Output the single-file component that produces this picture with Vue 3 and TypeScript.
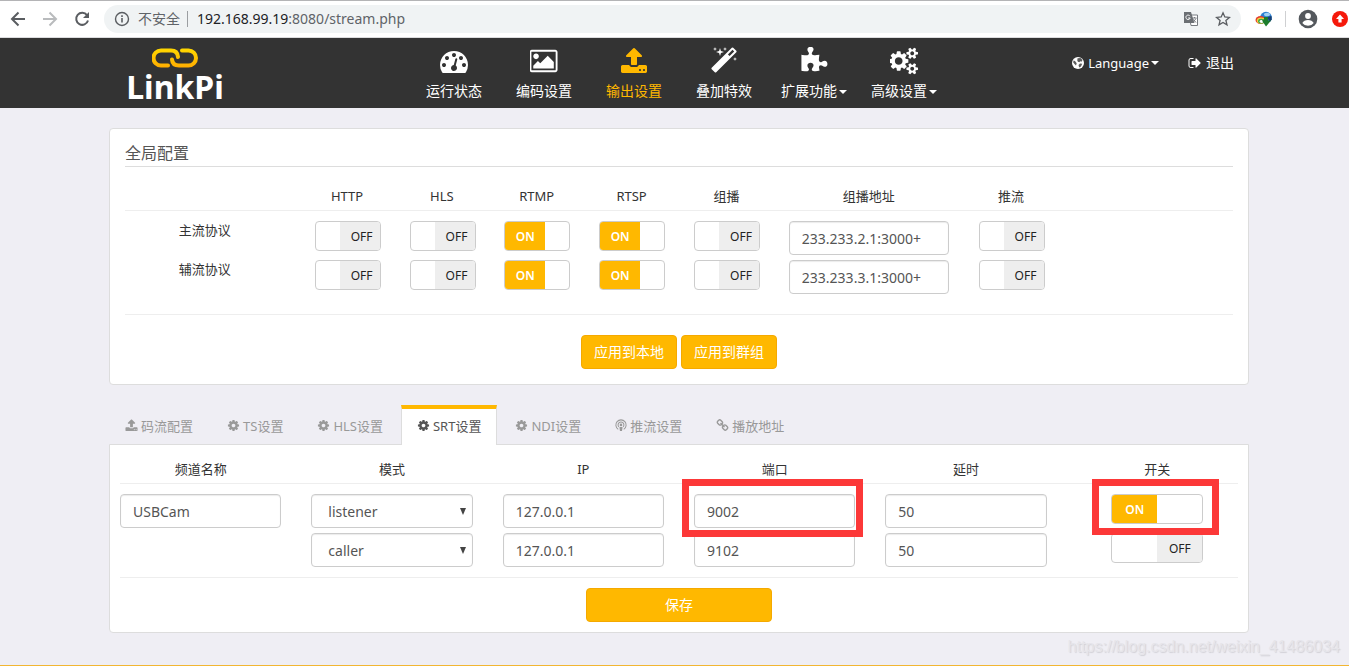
<script setup lang="ts">
import { ref } from 'vue'

interface NavItem { label: string; icon: string; box: string; active?: boolean; caret?: boolean }
interface Tab { label: string; icon: string; active?: boolean }

const cog = 'M1152 896q0-106-75-181t-181-75-181 75-75 181 75 181 181 75 181-75 75-181zm512-109v222q0 12-8 23t-20 13l-185 28q-19 54-39 91 35 50 107 138 10 12 10 25t-9 23q-27 37-99 108t-94 71q-12 0-26-9l-138-108q-44 23-91 38-16 136-29 186-7 28-36 28h-222q-14 0-24.5-8.5t-11.5-21.5l-28-184q-49-16-90-37l-141 107q-10 9-25 9-14 0-25-11-126-114-165-168-7-10-7-23 0-12 8-23 15-21 51-66.5t54-70.5q-27-50-41-99l-183-27q-13-2-21-12.5t-8-23.5v-222q0-12 8-23t19-13l186-28q14-46 39-92-40-57-107-138-10-12-10-24 0-10 9-23 26-36 98.5-107.5t94.5-71.5q13 0 26 10l138 107q44-23 91-38 16-136 29-186 7-28 36-28h222q14 0 24.5 8.5t11.5 21.5l28 184q49 16 90 37l142-107q9-9 24-9 13 0 25 10 129 119 165 170 7 8 7 22 0 12-8 23-15 21-51 66.5t-54 70.5q26 50 41 98l183 28q13 2 21 12.5t8 23.5z'
const upload = 'M1344 1472q0-26-19-45t-45-19-45 19-19 45 19 45 45 19 45-19 19-45zm256 0q0-26-19-45t-45-19-45 19-19 45 19 45 45 19 45-19 19-45zm128-224v320q0 40-28 68t-68 28h-1472q-40 0-68-28t-28-68v-320q0-40 28-68t68-28h427q21 56 70.5 92t110.5 36h256q61 0 110.5-36t70.5-92h427q40 0 68 28t28 68zm-325-648q-17 40-59 40h-256v448q0 26-19 45t-45 19h-256q-26 0-45-19t-19-45v-448h-256q-42 0-59-40-17-39 14-69l448-448q18-19 45-19t45 19l448 448q31 30 14 69z'
const gauge = 'M384 1152q0-53-37.5-90.5t-90.5-37.5-90.5 37.5-37.5 90.5 37.5 90.5 90.5 37.5 90.5-37.5 37.5-90.5zm192-448q0-53-37.5-90.5t-90.5-37.5-90.5 37.5-37.5 90.5 37.5 90.5 90.5 37.5 90.5-37.5 37.5-90.5zm428 481l101-382q6-26-7.5-48.5t-38.5-29.5-48 6.5-30 39.5l-101 382q-60 5-107 43.5t-63 98.5q-20 77 20 146t117 89 146-20 89-117q16-60-6-117t-72-91zm660-33q0-53-37.5-90.5t-90.5-37.5-90.5 37.5-37.5 90.5 37.5 90.5 90.5 37.5 90.5-37.5 37.5-90.5zm-640-640q0-53-37.5-90.5t-90.5-37.5-90.5 37.5-37.5 90.5 37.5 90.5 90.5 37.5 90.5-37.5 37.5-90.5zm448 192q0-53-37.5-90.5t-90.5-37.5-90.5 37.5-37.5 90.5 37.5 90.5 90.5 37.5 90.5-37.5 37.5-90.5zm320 448q0 261-141 483-19 29-54 29h-1402q-35 0-54-29-141-221-141-483 0-182 71-348t191-286 286-191 348-71 348 71 286 191 191 286 71 348z'
const picture = 'M576 576q0 80-56 136t-136 56-136-56-56-136 56-136 136-56 136 56 56 136zm1024 384v448h-1408v-192l320-320 160 160 512-512zm96-704h-1600q-13 0-22.5 9.5t-9.5 22.5v1216q0 13 9.5 22.5t22.5 9.5h1600q13 0 22.5-9.5t9.5-22.5v-1216q0-13-9.5-22.5t-22.5-9.5zm160 32v1216q0 66-47 113t-113 47h-1600q-66 0-113-47t-47-113v-1216q0-66 47-113t113-47h1600q66 0 113 47t47 113z'
const magic = 'M1254 581l293-293-107-107-293 293zm447-293q0 27-18 45l-1286 1286q-18 18-45 18t-45-18l-198-198q-18-18-18-45t18-45l1286-1286q18-18 45-18t45 18l198 198q18 18 18 45zm-1351-190l98 30-98 30-30 98-30-98-98-30 98-30 30-98zm350 162l196 60-196 60-60 196-60-196-196-60 196-60 60-196zm930 478l98 30-98 30-30 98-30-98-98-30 98-30 30-98zm-640-640l98 30-98 30-30 98-30-98-98-30 98-30 30-98z'
const puzzle = 'M1755 1082q0 81-44.5 135t-123.5 54q-41 0-77.5-17.5t-59-38-56.5-38-71-17.5q-110 0-110 124 0 39 16 115t15 115v5q-22 0-33 1-34 3-97.5 11.5t-115.5 13.5-98 5q-61 0-103-26.5t-42-83.5q0-37 17.5-71t38-56.5 38-59 17.5-77.5q0-79-54-123.5t-135-44.5q-84 0-143 45.5t-59 127.5q0 43 15 83t33.5 64.5 33.5 53 15 50.5q0 45-46 89-37 35-117 35-95 0-245-24-9-2-27.5-4t-27.5-4l-13-2q-1 0-3-1-2 0-2-1v-1024q2 1 17.5 3.5t34 5 21.5 3.5q150 24 245 24 80 0 117-35 46-44 46-89 0-22-15-50.5t-33.5-53-33.5-64.5-15-83q0-82 59-127.5t144-45.5q80 0 134 44.5t54 123.5q0 41-17.5 77.5t-38 59-38 56.5-17.5 71q0 57 42 83.5t103 26.5q64 0 180-15t163-17v2q-1 2-3.5 17.5t-5 34-3.5 21.5q-24 150-24 245 0 80 35 117 44 46 89 46 22 0 50.5-15t53-33.5 64.5-33.5 83-15q82 0 127.5 59t45.5 143z'
const cogs = 'M832 896q0-106-75-181t-181-75-181 75-75 181 75 181 181 75 181-75 75-181zm768 512q0-52-38-90t-90-38-90 38-38 90q0 53 37.5 90.5t90.5 37.5 90.5-37.5 37.5-90.5zm0-1024q0-52-38-90t-90-38-90 38-38 90q0 53 37.5 90.5t90.5 37.5 90.5-37.5 37.5-90.5zm-384 421v185q0 10-7 19.5t-16 10.5l-155 24q-11 35-32 76 34 48 90 115 7 11 7 20 0 12-7 19-23 30-82.5 89.5t-78.5 59.5q-11 0-21-7l-115-90q-37 19-77 31-11 108-23 155-7 24-30 24h-186q-11 0-20-7.5t-10-17.5l-23-153q-34-10-75-31l-118 89q-7 7-20 7-11 0-21-8-144-133-144-160 0-9 7-19 10-14 41-53t47-61q-23-44-35-82l-152-24q-10-1-17-9.5t-7-19.5v-185q0-10 7-19.5t16-10.5l155-24q11-35 32-76-34-48-90-115-7-11-7-20 0-12 7-20 22-30 82-89t79-59q11 0 21 7l115 90q34-18 77-32 11-108 23-154 7-24 30-24h186q11 0 20 7.5t10 17.5l23 153q34 10 75 31l118-89q8-7 20-7 11 0 21 8 144 133 144 160 0 8-7 19-12 16-42 54t-45 60q23 48 34 82l152 23q10 2 17 10.5t7 19.5zm640 533v140q0 16-149 31-12 27-30 52 51 113 51 138 0 4-4 7-122 71-124 71-8 0-46-47t-52-68q-20 2-30 2t-30-2q-14 21-52 68t-46 47q-2 0-124-71-4-3-4-7 0-25 51-138-18-25-30-52-149-15-149-31v-140q0-16 149-31 13-29 30-52-51-113-51-138 0-4 4-7 4-2 35-20t59-34 30-16q8 0 46 46.5t52 67.5q20-2 30-2t30 2q51-71 92-112l6-2q4 0 124 70 4 3 4 7 0 25-51 138 17 23 30 52 149 15 149 31zm0-1024v140q0 16-149 31-12 27-30 52 51 113 51 138 0 4-4 7-122 71-124 71-8 0-46-47t-52-68q-20 2-30 2t-30-2q-14 21-52 68t-46 47q-2 0-124-71-4-3-4-7 0-25 51-138-18-25-30-52-149-15-149-31v-140q0-16 149-31 13-29 30-52-51-113-51-138 0-4 4-7 4-2 35-20t59-34 30-16q8 0 46 46.5t52 67.5q20-2 30-2t30 2q51-71 92-112l6-2q4 0 124 70 4 3 4 7 0 25-51 138 17 23 30 52 149 15 149 31z'
const signOut = 'M704 1440q0 4 1 20t.5 26.5-3 23.5-10 19.5-20.5 6.5h-320q-119 0-203.5-84.5t-84.5-203.5v-704q0-119 84.5-203.5t203.5-84.5h320q13 0 22.5 9.5t9.5 22.5q0 4 1 20t.5 26.5-3 23.5-10 19.5-20.5 6.5h-320q-66 0-113 47t-47 113v704q0 66 47 113t113 47h312l11.5 1 11.5 3 8 5.5 7 9 2 13.5zm928-544q0 26-19 45l-544 544q-19 19-45 19t-45-19-19-45v-288h-448q-26 0-45-19t-19-45v-384q0-26 19-45t45-19h448v-288q0-26 19-45t45-19 45 19l544 544q19 19 19 45z'
const chain = 'M1520 1216q0-40-28-68l-208-208q-28-28-68-28-42 0-72 32 3 3 19 18.5t21.5 21.5 15 19 13 25.5 3.5 27.5q0 40-28 68t-68 28q-15 0-27.5-3.5t-25.5-13-19-15-21.5-21.5-18.5-19q-33 31-33 73 0 40 28 68l206 207q27 27 68 27 40 0 68-26l147-146q28-28 28-67zm-703-705q0-40-28-68l-206-207q-28-28-68-28-39 0-68 27l-147 146q-28 28-28 67 0 40 28 68l208 208q27 27 68 27 42 0 72-31-3-3-19-18.5t-21.5-21.5-15-19-13-25.5-3.5-27.5q0-40 28-68t68-28q15 0 27.5 3.5t25.5 13 19 15 21.5 21.5 18.5 19q33-31 33-73zm895 705q0 120-85 203l-147 146q-83 83-203 83-121 0-204-85l-206-207q-83-83-83-203 0-123 88-209l-88-88q-86 88-208 88-120 0-204-84l-208-208q-84-84-84-204t85-203l147-146q83-83 203-83 121 0 204 85l206 207q83 83 83 203 0 123-88 209l88 88q86-88 208-88 120 0 204 84l208 208q84 84 84 204z'

const nav: NavItem[] = [
  { label: '运行状态', icon: gauge, box: '0 0 1792 1792' },
  { label: '编码设置', icon: picture, box: '-32 0 1920 1792' },
  { label: '输出设置', icon: upload, box: '0 0 1792 1792', active: true },
  { label: '叠加特效', icon: magic, box: '0 0 1792 1792' },
  { label: '扩展功能', icon: puzzle, box: '0 0 1792 1792', caret: true },
  { label: '高级设置', icon: cogs, box: '0 0 1856 1792', caret: true },
]

const tabs: Tab[] = [
  { label: '码流配置', icon: upload },
  { label: 'TS设置', icon: cog },
  { label: 'HLS设置', icon: cog },
  { label: 'SRT设置', icon: cog, active: true },
  { label: 'NDI设置', icon: cog },
  { label: '推流设置', icon: 'podcast' },
  { label: '播放地址', icon: chain },
]

const protocolHeads = ['', 'HTTP', 'HLS', 'RTMP', 'RTSP', '组播', '组播地址', '推流']
const protocols = ref([
  { name: '主流协议', flags: [false, false, true, true, false], address: '233.233.2.1:3000+', push: false },
  { name: '辅流协议', flags: [false, false, true, true, false], address: '233.233.3.1:3000+', push: false },
])

const srtHeads = ['频道名称', '模式', 'IP', '端口', '延时', '开关']
const channels = ref([
  { name: 'USBCam', mode: 'listener', ip: '127.0.0.1', port: '9002', delay: '50', on: true, marked: true },
  { name: '', mode: 'caller', ip: '127.0.0.1', port: '9102', delay: '50', on: false, marked: false },
])
</script>

<template>
  <div class="page">
    <div class="browser">
      <button class="tool" aria-label="后退">
        <svg width="20" height="20" viewBox="0 0 20 20" fill="none" stroke="#5a5d61" stroke-width="2"><path d="M17 10H4M10.500 3.500L4 10l6.500 6.500" /></svg>
      </button>
      <button class="tool" aria-label="前进">
        <svg width="20" height="20" viewBox="0 0 20 20" fill="none" stroke="#b9bbbd" stroke-width="2"><path d="M3 10h13M9.500 3.500L16 10l-6.500 6.500" /></svg>
      </button>
      <button class="tool" aria-label="刷新">
        <svg width="20" height="20" viewBox="0 0 20 20"><path d="M15 6.200A6 6 0 1 0 16 11.500" fill="none" stroke="#5a5d61" stroke-width="2" /><path d="M17 3v6h-6z" fill="#5a5d61" /></svg>
      </button>
      <div class="address">
        <svg width="16" height="16" viewBox="0 0 16 16"><circle cx="8" cy="8" r="6.500" fill="none" stroke="#5a5d61" stroke-width="1.400" /><path d="M7.200 7h1.600v4.500H7.200zM7.200 4.300h1.600v1.600H7.200z" fill="#5a5d61" /></svg>
        <span class="insecure">不安全</span>
        <span class="url"><b>192.168.99.19</b>:8080/stream.php</span>
        <svg class="translate" width="16" height="16" viewBox="0 0 16 16"><path d="M6 4h8.500v10.500H8z" fill="#fff" stroke="#777b80" /><path d="M1 1h7l3.500 11H1z" fill="#6b6f73" /><path d="M7 5.200A2.200 2.200 0 1 0 7.200 7H5.200" fill="none" stroke="#fff" /><path d="M9.500 7h4M11.500 6v1M13 7.500l-3 4M10.500 8.500l2.500 3" stroke="#777b80" fill="none" /></svg>
        <svg width="16" height="16" viewBox="0 0 16 16" fill="none" stroke="#5a5d61" stroke-width="1.300"><path d="M8 1.800l1.800 4.200 4.600.4-3.500 3 1.100 4.500L8 11.500l-4 2.400 1.100-4.500-3.500-3 4.600-.4z" /></svg>
      </div>
      <svg class="ext" width="18" height="16" viewBox="0 0 18 16">
        <circle cx="11" cy="6.500" r="5.800" fill="#2b7fd0" />
        <ellipse cx="12" cy="3.500" rx="3" ry="1.800" fill="#9fd0f2" />
        <path d="M12 6l4.500-1 .3 3.500-2 2.500z" fill="#173f73" />
        <ellipse cx="5.500" cy="9" rx="5" ry="4" fill="#e33b2e" />
        <ellipse cx="6" cy="9.600" rx="4.200" ry="3.200" fill="#f4d03a" />
        <ellipse cx="6.300" cy="10.200" rx="3.200" ry="2.400" fill="#3fa648" />
        <ellipse cx="6.600" cy="10.500" rx="2" ry="1.400" fill="#fff" />
        <path d="M7 9.500L9 8.500V6h4v3.500h3L11 15.500z" fill="#1c7d2c" />
      </svg>
      <span class="divider"></span>
      <svg class="user" width="20" height="20" viewBox="0 0 20 20"><circle cx="10" cy="10" r="9.300" fill="#54585d" /><circle cx="10" cy="7" r="2.900" fill="#fff" /><path d="M4.300 14q1.700-3 5.700-3t5.700 3q-2 2.800-5.700 2.800T4.300 14z" fill="#fff" /></svg>
      <svg class="update" width="16" height="16" viewBox="0 0 16 16"><circle cx="8" cy="8" r="8" fill="#f5190b" /><path d="M8 3.600L12 8H9.600v3.600H6.400V8H4z" fill="#fff" /></svg>
    </div>

    <header class="navbar">
      <div class="container bar">
        <a class="brand" href="#" aria-label="LinkPi">
          <svg width="46" height="20" viewBox="0 0 46 20" fill="none" stroke-width="4" stroke-linecap="round">
            <defs><linearGradient id="gold" x1="0" y1="0" x2="0" y2="20" gradientUnits="userSpaceOnUse"><stop offset="0" stop-color="#ffd900" /><stop offset="1" stop-color="#ffab00" /></linearGradient></defs>
            <path d="M16 17.500H9A7.500 7.500 0 0 1 9 2.500H19Q25.500 2.500 26 9" stroke="url(#gold)" />
            <path d="M30 2.500h6.500A7.500 7.500 0 0 1 36.500 17.500H27Q20.500 17.500 20 11.500" stroke="url(#gold)" />
          </svg>
          <span class="wordmark">LinkPi</span>
        </a>
        <nav class="menu">
          <a v-for="n in nav" :key="n.label" href="#" :class="{ active: n.active }">
            <svg width="28" height="28" :viewBox="n.box" fill="currentColor"><path :d="n.icon" /></svg>
            <span>{{ n.label }}<i v-if="n.caret" class="caret"></i></span>
          </a>
        </nav>
        <nav class="side">
          <a class="language" href="#">
            <svg width="12" height="12" viewBox="0 0 12 12"><circle cx="6" cy="6" r="6" fill="#fff" /><path d="M5.500 1.200L8.500 1l2 2-1 1.800-1.300-.6-.8 1-1.500-.4-.6-1.200zM1.500 3.500l1.500.5 1.700 2.300L4 8.500 2.500 7 1.200 5.500zM8 6.500l2.200.3L9 9.500l-1.800 1L6.500 8z" fill="#333" opacity=".8" /></svg>
            Language<i class="caret"></i>
          </a>
          <a href="#"><svg width="14" height="14" viewBox="0 0 1792 1792" fill="#fff"><path :d="signOut" /></svg> 退出</a>
        </nav>
      </div>
    </header>

    <main class="container">
      <section class="panel global">
        <h2>全局配置</h2>
        <table class="protocols">
          <thead>
            <tr><th v-for="h in protocolHeads" :key="h" scope="col">{{ h }}</th></tr>
          </thead>
          <tbody>
            <tr v-for="p in protocols" :key="p.name">
              <th scope="row">{{ p.name }}</th>
              <td v-for="(_, i) in p.flags" :key="i">
                <label class="switch"><input v-model="p.flags[i]" type="checkbox" :aria-label="p.name + protocolHeads[i + 1]" /><span class="on">ON</span><span class="off">OFF</span></label>
              </td>
              <td><input v-model="p.address" class="field" type="text" :aria-label="p.name + '组播地址'" /></td>
              <td>
                <label class="switch"><input v-model="p.push" type="checkbox" :aria-label="p.name + '推流'" /><span class="on">ON</span><span class="off">OFF</span></label>
              </td>
            </tr>
          </tbody>
        </table>
        <div class="actions">
          <button class="btn">应用到本地</button>
          <button class="btn">应用到群组</button>
        </div>
      </section>

      <ul class="tabs">
        <li v-for="t in tabs" :key="t.label">
          <a href="#" :class="{ active: t.active }">
            <svg v-if="t.icon === 'podcast'" width="12" height="13" viewBox="0 0 14 14" fill="none" stroke="currentColor" stroke-width="1.200"><path d="M3.800 11.500a6 6 0 1 1 6.400 0M4.600 8.700a3.400 3.400 0 1 1 4.800 0" /><circle cx="7" cy="6.300" r="1.500" fill="currentColor" stroke="none" /><path d="M5.200 8.800h3.600L8.200 13.500H5.800z" fill="currentColor" stroke="none" /></svg>
            <svg v-else width="13" height="13" viewBox="0 0 1792 1792" fill="currentColor"><path :d="t.icon" /></svg>
            {{ t.label }}
          </a>
        </li>
      </ul>

      <section class="panel srt">
        <table class="channels">
          <thead>
            <tr><th v-for="h in srtHeads" :key="h" scope="col">{{ h }}</th></tr>
          </thead>
          <tbody>
            <tr v-for="(c, i) in channels" :key="i">
              <td><input v-if="c.name" v-model="c.name" class="field" type="text" aria-label="频道名称" /></td>
              <td>
                <select v-model="c.mode" class="field" aria-label="模式">
                  <option>listener</option>
                  <option>caller</option>
                </select>
              </td>
              <td><input v-model="c.ip" class="field" type="text" aria-label="IP" /></td>
              <td :class="{ mark: c.marked }"><input v-model="c.port" class="field" type="text" aria-label="端口" /></td>
              <td><input v-model="c.delay" class="field" type="text" aria-label="延时" /></td>
              <td class="toggle" :class="{ mark: c.marked }">
                <label class="switch wide"><input v-model="c.on" type="checkbox" aria-label="开关" /><span class="on">ON</span><span class="off">OFF</span></label>
              </td>
            </tr>
          </tbody>
        </table>
        <div class="actions">
          <button class="btn save">保存</button>
        </div>
      </section>
    </main>
    <footer class="footer"><span>https://blog.csdn.net/weixin_41486034</span></footer>
  </div>
</template>

<style>
body {
  background: #efeef4;
}
</style>

<style scoped>
.page,
.page * {
  box-sizing: border-box;
}
.page {
  min-height: 100vh;
  display: flex;
  flex-direction: column;
  background: #efeef4;
  color: #333;
  font: 13px/18px "Noto Sans", "Noto Sans CJK SC", sans-serif;
}
a {
  color: inherit;
  text-decoration: none;
}
button,
input,
select {
  font-family: inherit;
}
svg {
  flex: none;
}

/* browser toolbar */
.browser {
  display: flex;
  align-items: center;
  height: 38px;
  padding-left: 8px;
  background: #fff;
  border-top: 1px solid #b4b4b6;
  border-bottom: 1px solid #dcdcde;
}
.tool {
  display: flex;
  margin-right: 12px;
  padding: 0;
  border: 0;
  background: none;
}
.address {
  flex: 1;
  display: flex;
  align-items: center;
  height: 28px;
  padding: 0 10px;
  border-radius: 14px;
  background: #f0f3f4;
  color: #5f6368;
}
.insecure {
  margin-left: 8px;
  padding-right: 7px;
  border-right: 1px solid #9b9ea1;
  font-size: 14px;
  line-height: 16px;
}
.url {
  flex: 1;
  margin-left: 9px;
  font-size: 14px;
}
.url b {
  color: #202124;
  font-weight: 400;
}
.translate {
  margin-right: 16px;
}
.ext {
  margin-left: 14px;
}
.divider {
  width: 1px;
  height: 16px;
  margin: 0 12px;
  background: #cfd0d2;
}
.update {
  margin: 0 1px 0 14px;
}

/* site header */
.container {
  width: 100%;
  max-width: 1149px;
  margin: 0 auto;
  padding-left: 9px;
}
.navbar {
  background: #333;
  color: #fff;
}
.bar {
  display: flex;
  height: 70px;
}
.brand {
  display: flex;
  flex-direction: column;
  align-items: center;
  width: 132px;
  padding-top: 10px;
}
.wordmark {
  font-size: 32px;
  font-weight: 700;
  line-height: 38px;
}
.menu {
  display: flex;
  margin-left: 168px;
}
.menu a {
  display: flex;
  flex-direction: column;
  align-items: center;
  width: 90px;
  padding-top: 9px;
  font-size: 14px;
  line-height: 20px;
  white-space: nowrap;
}
.menu span {
  margin-top: 6px;
}
.menu .active {
  color: #ffb800;
}
.caret {
  display: inline-block;
  margin-left: 2px;
  border: 4px solid transparent;
  border-top-color: currentColor;
  border-bottom: 0;
  vertical-align: middle;
}
.side {
  display: flex;
  gap: 29px;
  margin-left: auto;
  padding: 15px 15px 0 0;
  font-size: 14px;
  line-height: 20px;
}
.side a {
  display: flex;
  align-items: center;
  gap: 4px;
  height: 20px;
}
.side .language {
  font-size: 13px;
}
.side .caret {
  margin-left: -2px;
}

/* panels */
.panel {
  border: 1px solid #ddd;
  border-radius: 4px;
  background: #fff;
}
.global {
  margin-top: 20px;
  padding: 13px 15px 15px;
}
h2 {
  margin: 0 0 20px;
  padding-bottom: 1px;
  border-bottom: 1px solid #ddd;
  color: #555;
  font-size: 16px;
  font-weight: 400;
  line-height: 23px;
}
table,
thead,
tbody {
  display: block;
}
tr {
  display: grid;
  margin: 0 -15px;
}
th,
td {
  min-width: 0;
  padding: 0 15px;
  font-weight: 400;
  text-align: center;
}
thead {
  padding-bottom: 5px;
  border-bottom: 1px solid #eee;
}
tbody {
  padding-top: 10px;
}
tbody tr {
  min-height: 39px;
}
.protocols tr {
  grid-template-columns: 2fr repeat(5, 1fr) 2fr 1fr 2fr;
}
.channels tr {
  grid-template-columns: repeat(6, 1fr);
}
.field {
  display: block;
  width: 100%;
  height: 34px;
  padding: 0 12px;
  border: 1px solid #ccc;
  border-radius: 4px;
  background: #fff;
  box-shadow: inset 0 1px 1px rgba(0, 0, 0, 0.08);
  color: #555;
  font-size: 14px;
}
select.field {
  appearance: none;
  padding: 0 16px;
  background: #fff url("data:image/svg+xml,%3Csvg xmlns='http://www.w3.org/2000/svg' width='6' height='7'%3E%3Cpath d='M0 0h6L3 7z' fill='%23444'/%3E%3C/svg%3E") no-repeat right 6px top 13px;
}

/* two-state switch */
.switch {
  display: flex;
  width: 66px;
  height: 30px;
  overflow: hidden;
  border: 1px solid #ccc;
  border-radius: 4px;
  background: #fff;
  font-size: 12px;
  line-height: 30px;
}
.switch input {
  position: absolute;
  opacity: 0;
}
.switch span {
  width: 40px;
}
.switch .off {
  margin-left: auto;
  padding-left: 4px;
  background: #eee;
  color: #222;
}
.switch .on {
  display: none;
  background: #ffb800;
  color: #fff;
  font-weight: 600;
}
.switch input:checked ~ .on {
  display: block;
}
.switch input:checked ~ .off {
  display: none;
}
.switch.wide {
  width: 92px;
  margin: 0 auto;
}
.wide span {
  width: 45px;
}
.wide .off {
  padding-left: 0;
}
.actions {
  display: flex;
  justify-content: center;
  gap: 4px;
  border-top: 1px solid #eee;
}
.global .actions {
  margin-top: 15px;
  padding-top: 20px;
}
.btn {
  height: 34px;
  padding: 0 12px 2px;
  border: 1px solid #f5a900;
  border-radius: 4px;
  background: #ffb800;
  color: #fff;
  font-size: 14px;
}
.save {
  width: 186px;
}

/* tabs */
.tabs {
  display: flex;
  gap: 2px;
  margin: 20px 0 -1px;
  padding: 0;
  list-style: none;
}
.tabs a {
  display: flex;
  align-items: center;
  gap: 3px;
  height: 40px;
  padding: 0 15px 3px;
  border: 1px solid transparent;
  border-top-width: 4px;
  border-bottom: 0;
  color: #999;
}
.tabs .active {
  border-color: #ffb800 #ddd transparent;
  background: #fff;
  color: #555;
}
.srt {
  padding: 15px 10px 10px;
  border-radius: 0 0 4px 4px;
}
.srt .actions {
  margin-top: 5px;
  padding-top: 10px;
}

/* red callouts laid over the highlighted cells */
.mark {
  position: relative;
}
.mark::after {
  content: "";
  position: absolute;
  z-index: 1;
  inset: -15px 7px -4px 3px;
  border: 7px solid #fc3838;
  pointer-events: none;
}
.toggle.mark::after {
  inset: -15px 34px -2px 30px;
}

.footer {
  margin-top: auto;
  padding: 0 9px 6px;
  border-bottom: 1px solid #f2b632;
  color: #e6e5ea;
  font: 16px/24px "Liberation Sans", sans-serif;
  text-align: right;
  text-shadow: 1px 1px 1px #d2d1d7;
}
</style>
